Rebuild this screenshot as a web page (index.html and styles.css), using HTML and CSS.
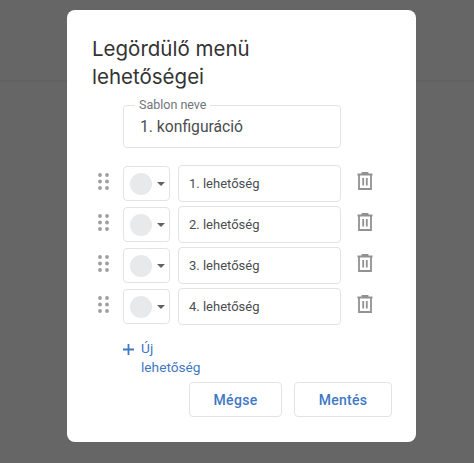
FILE: index.html
```html
<!DOCTYPE html>
<html lang="hu">
<head>
    <meta charset="UTF-8">
    <meta name="viewport" content="width=device-width, initial-scale=1.0">
    <title>Legördülő menü lehetőségei</title>
    <link rel="stylesheet" href="styles.css">
</head>
<body>
    <!-- Sötétített oldal a párbeszédablak mögött -->
    <div class="backdrop">
        <div class="backdrop-bar"></div>
    </div>

    <div class="dialog">
        <h1>Legördülő menü lehetőségei</h1>

        <div class="name-field">
            <span class="name-label">Sablon neve</span>
            <span class="name-value">1. konfiguráció</span>
        </div>

        <div class="options">
            <div class="option">
                <svg class="grip" viewBox="0 0 11 17"><g fill="#9e9e9e"><circle cx="2" cy="2" r="1.900"/><circle cx="9" cy="2" r="1.900"/><circle cx="2" cy="8.5" r="1.900"/><circle cx="9" cy="8.5" r="1.900"/><circle cx="2" cy="15" r="1.900"/><circle cx="9" cy="15" r="1.900"/></g></svg>
                <div class="color-select"><span class="swatch"></span><span class="caret"></span></div>
                <div class="option-input">1. lehetőség</div>
                <svg class="trash" viewBox="0 0 16 18"><path d="M.5 2.500h15M5.500 2.500V.9h5v1.600M2 2.500V17h12V2.500M6.200 6v7.500M9.800 6v7.500" fill="none" stroke="#929292" stroke-width="1.800"/></svg>
            </div>
            <div class="option">
                <svg class="grip" viewBox="0 0 11 17"><g fill="#9e9e9e"><circle cx="2" cy="2" r="1.900"/><circle cx="9" cy="2" r="1.900"/><circle cx="2" cy="8.5" r="1.900"/><circle cx="9" cy="8.5" r="1.900"/><circle cx="2" cy="15" r="1.900"/><circle cx="9" cy="15" r="1.900"/></g></svg>
                <div class="color-select"><span class="swatch"></span><span class="caret"></span></div>
                <div class="option-input">2. lehetőség</div>
                <svg class="trash" viewBox="0 0 16 18"><path d="M.5 2.500h15M5.500 2.500V.9h5v1.600M2 2.500V17h12V2.500M6.200 6v7.500M9.800 6v7.500" fill="none" stroke="#929292" stroke-width="1.800"/></svg>
            </div>
            <div class="option">
                <svg class="grip" viewBox="0 0 11 17"><g fill="#9e9e9e"><circle cx="2" cy="2" r="1.900"/><circle cx="9" cy="2" r="1.900"/><circle cx="2" cy="8.5" r="1.900"/><circle cx="9" cy="8.5" r="1.900"/><circle cx="2" cy="15" r="1.900"/><circle cx="9" cy="15" r="1.900"/></g></svg>
                <div class="color-select"><span class="swatch"></span><span class="caret"></span></div>
                <div class="option-input">3. lehetőség</div>
                <svg class="trash" viewBox="0 0 16 18"><path d="M.5 2.500h15M5.500 2.500V.9h5v1.600M2 2.500V17h12V2.500M6.200 6v7.500M9.800 6v7.500" fill="none" stroke="#929292" stroke-width="1.800"/></svg>
            </div>
            <div class="option">
                <svg class="grip" viewBox="0 0 11 17"><g fill="#9e9e9e"><circle cx="2" cy="2" r="1.900"/><circle cx="9" cy="2" r="1.900"/><circle cx="2" cy="8.5" r="1.900"/><circle cx="9" cy="8.5" r="1.900"/><circle cx="2" cy="15" r="1.900"/><circle cx="9" cy="15" r="1.900"/></g></svg>
                <div class="color-select"><span class="swatch"></span><span class="caret"></span></div>
                <div class="option-input">4. lehetőség</div>
                <svg class="trash" viewBox="0 0 16 18"><path d="M.5 2.500h15M5.500 2.500V.9h5v1.600M2 2.500V17h12V2.500M6.200 6v7.500M9.800 6v7.500" fill="none" stroke="#929292" stroke-width="1.800"/></svg>
            </div>
        </div>

        <div class="add-option">
            <svg class="plus" viewBox="0 0 11 11"><path d="M5.500 0v11M0 5.500h11" stroke="#3f78c4" stroke-width="1.800" fill="none"/></svg>
            <span class="add-text">Új<br>lehetőség</span>
        </div>

        <div class="actions">
            <button class="btn btn-cancel">Mégse</button>
            <button class="btn btn-save">Mentés</button>
        </div>
    </div>
</body>
</html>
```

FILE: styles.css
```css
* {
    margin: 0;
    padding: 0;
    box-sizing: border-box;
}

body {
    height: 463px;
    overflow: hidden;
    background: #666;
    font-family: 'Roboto', sans-serif;
    position: relative;
}

/* Háttér */
.backdrop {
    height: 100%;
}

.backdrop-bar {
    height: 82px;
    border-bottom: 2px solid #626262;
}

/* Párbeszédablak */
.dialog {
    position: absolute;
    left: 67px;
    top: 10px;
    width: 349px;
    height: 432px;
    background: #fff;
    border-radius: 8px;
    padding: 25px 24px 25px 25px;
}

h1 {
    font-family: 'Inter', sans-serif;
    font-weight: 400;
    font-size: 20.500px;
    line-height: 28px;
    color: #333;
    width: 200px;
}

.name-field {
    position: relative;
    width: 218px;
    height: 43px;
    margin: 14px 0 0 31px;
    border: 1px solid #e2e3e5;
    border-radius: 4px;
    padding: 0 16px;
    display: flex;
    align-items: center;
}

.name-label {
    position: absolute;
    left: 11px;
    top: -8px;
    padding: 0 4px;
    background: #fff;
    font-size: 12.500px;
    line-height: 14px;
    color: #70757a;
}

.name-value {
    font-size: 15.700px;
    color: #4a4d50;
}

/* Lehetőségek */
.options {
    margin-top: 17px;
    display: flex;
    flex-direction: column;
    gap: 4px;
}

.option {
    display: flex;
    align-items: center;
    height: 37px;
}

.grip {
    width: 11px;
    height: 17px;
    margin: -5px 14px 0 6px;
}

.color-select {
    width: 47px;
    height: 35px;
    border: 1px solid #e2e3e5;
    border-radius: 4px;
    display: flex;
    align-items: center;
    padding-left: 6px;
}

.swatch {
    width: 22px;
    height: 22px;
    border-radius: 50%;
    background: #e8e9eb;
}

.caret {
    margin-left: 5px;
    border-left: 4px solid transparent;
    border-right: 4px solid transparent;
    border-top: 4px solid #5f6368;
}

.option-input {
    width: 163px;
    height: 37px;
    margin-left: 8px;
    border: 1px solid #e2e3e5;
    border-radius: 4px;
    padding-left: 10px;
    display: flex;
    align-items: center;
    font-size: 13px;
    color: #4a4d50;
}

.trash {
    width: 16px;
    height: 18px;
    margin: -6px 0 0 16px;
}

/* Új lehetőség */
.add-option {
    display: flex;
    margin: 14px 0 0 31px;
}

.plus {
    width: 11px;
    height: 11px;
    margin-top: 5px;
}

.add-text {
    margin-left: 7px;
    font-size: 13.700px;
    line-height: 19px;
    color: #3f78c4;
}

/* Gombok */
.actions {
    display: flex;
    justify-content: flex-end;
    gap: 12px;
    margin-top: 5px;
}

.btn {
    height: 35px;
    background: #fff;
    border: 1px solid #e2e3e5;
    border-radius: 4px;
    font-family: 'Roboto', sans-serif;
    font-weight: 500;
    font-size: 14px;
    letter-spacing: 0.3px;
    color: #3f78c4;
}

.btn-cancel {
    width: 93px;
}

.btn-save {
    width: 98px;
}
```
